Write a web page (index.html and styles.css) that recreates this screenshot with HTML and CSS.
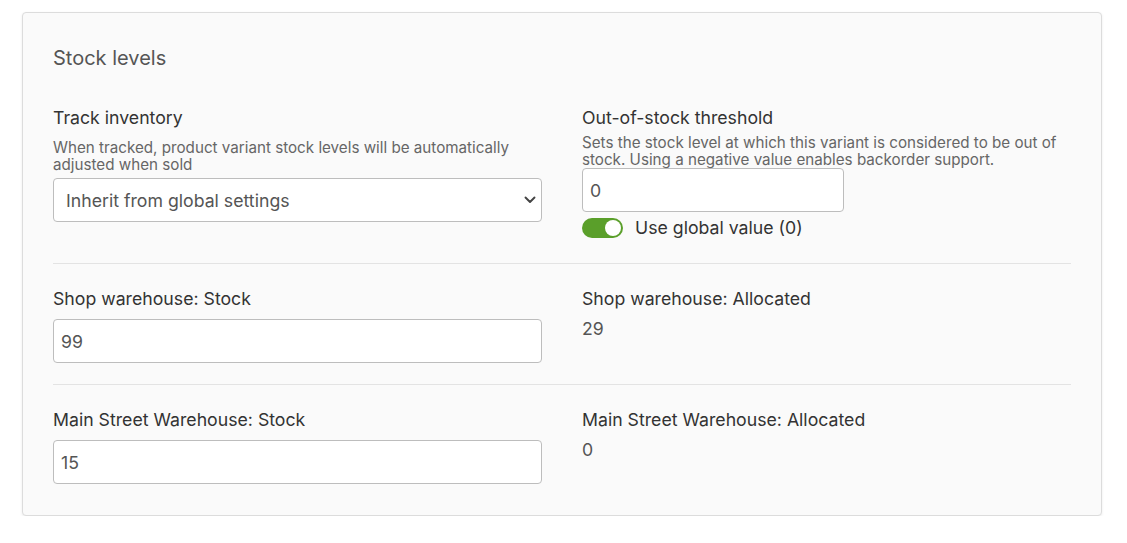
FILE: index.html
```html
<!DOCTYPE html>
<html>
<head>
<meta charset="utf-8">
<link rel="stylesheet" href="styles.css">
</head>
<body>
<div class="card">
  <h2 class="title">Stock levels</h2>
  <div class="row row-first">
    <div class="col">
      <div class="label">Track inventory</div>
      <div class="desc desc-left">When tracked, product variant stock levels will be automatically adjusted when sold</div>
      <div class="select">
        <span>Inherit from global settings</span>
        <svg class="chev" width="12" height="8" viewBox="0 0 12 8"><path d="M1.5 1.5 L6 6 L10.5 1.5" fill="none" stroke="#444" stroke-width="1.9" stroke-linecap="round" stroke-linejoin="round"/></svg>
      </div>
    </div>
    <div class="col">
      <div class="label">Out-of-stock threshold</div>
      <div class="desc desc-right">Sets the stock level at which this variant is considered to be out of stock. Using a negative value enables backorder support.</div>
      <div class="input input-small">0</div>
      <div class="toggle-row">
        <span class="toggle"><span class="knob"></span></span>
        <span class="toggle-label">Use global value (0)</span>
      </div>
    </div>
  </div>
  <div class="row">
    <div class="col">
      <div class="label label-field">Shop warehouse: Stock</div>
      <div class="input input-wide">99</div>
    </div>
    <div class="col">
      <div class="label label-field">Shop warehouse: Allocated</div>
      <div class="value">29</div>
    </div>
  </div>
  <div class="row row-last">
    <div class="col">
      <div class="label label-field">Main Street Warehouse: Stock</div>
      <div class="input input-wide">15</div>
    </div>
    <div class="col">
      <div class="label label-field">Main Street Warehouse: Allocated</div>
      <div class="value">0</div>
    </div>
  </div>
</div>
</body>
</html>
```
FILE: styles.css
```css
html, body {
  margin: 0;
  padding: 0;
  background: #ffffff;
}
body {
  padding: 12px 0 0 22px;
  font-family: Inter, "Noto Sans", sans-serif;
  color: #333;
}
.card {
  box-sizing: border-box;
  width: 1080px;
  height: 504px;
  border: 1px solid #dcdcdc;
  border-radius: 4px;
  background: #fafafa;
  box-shadow: 0 1px 3px rgba(0,0,0,0.08);
  padding: 34px 30px 0 30px;
}
.title {
  margin: 0;
  font-size: 20px;
  font-weight: 400;
  line-height: 23px;
  color: #555;
}
.row {
  display: grid;
  grid-template-columns: 489px 1fr;
  column-gap: 40px;
  border-bottom: 1px solid #e3e3e3;
  padding: 23px 0 21px 0;
}
.row-first {
  margin-top: 14px;
  padding-top: 23px;
  padding-bottom: 24px;
}
.row-last {
  border-bottom: none;
}
.label {
  font-size: 17.7px;
  line-height: 22px;
  color: #333;
}
.label-field {
  line-height: 23px;
}
.desc {
  font-size: 15.2px;
  line-height: 17px;
  color: #666;
}
.desc-left {
  margin-top: 10px;
  margin-bottom: 5px;
}
.desc-right {
  margin-top: 5px;
  margin-bottom: 0;
}
.select, .input {
  box-sizing: border-box;
  height: 44px;
  border: 1px solid #bdbdbd;
  border-radius: 4px;
  background: #fff;
  font-size: 17.7px;
  color: #555;
  display: flex;
  align-items: center;
}
.select {
  padding: 0 5px 0 12px;
  justify-content: space-between;
}
.input {
  padding: 0 7px;
}
.input-small {
  width: 262px;
}
.input-wide {
  width: 489px;
  margin-top: 9px;
}
.toggle-row {
  display: flex;
  align-items: center;
  margin-top: 5px;
}
.toggle {
  box-sizing: border-box;
  width: 41px;
  height: 20px;
  border-radius: 10px;
  background: #5a9f2a;
  display: flex;
  justify-content: flex-end;
  align-items: center;
  padding-right: 2px;
}
.knob {
  width: 16px;
  height: 16px;
  border-radius: 50%;
  background: #fff;
}
.toggle-label {
  margin-left: 12px;
  font-size: 17.7px;
  line-height: 22px;
  color: #333;
}
.value {
  margin-top: 8px;
  font-size: 17.7px;
  line-height: 22px;
  color: #555;
}
```
